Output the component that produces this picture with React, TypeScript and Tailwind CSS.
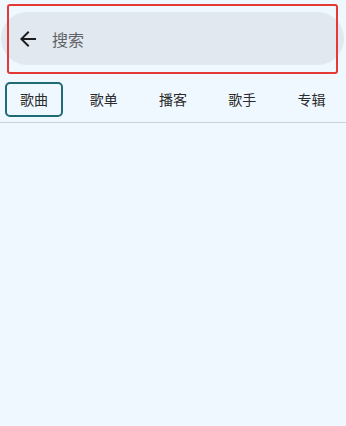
import { MdArrowBack } from "react-icons/md";

const tabs = ["歌曲", "歌单", "播客", "歌手", "专辑"];

export default function App() {
  return (
    <div
      className="w-[346px] h-[426px] bg-[#f0f8ff] overflow-hidden"
      style={{ fontFamily: '"Noto Sans CJK SC", "Noto Sans", sans-serif' }}
    >
      {/* search bar */}
      <div className="relative h-[78px] pt-[12px] pl-[1px] pr-[2px]">
        <div className="flex items-center h-[53px] rounded-full bg-[#e1e8ef] pl-[15px]">
          <MdArrowBack className="w-[24px] h-[24px] text-[#1d1d1f]" />
          <span className="ml-[12px] text-[16px] text-[#5f6368] leading-none">搜索</span>
        </div>
        <div className="absolute left-[7px] top-[4px] w-[331px] h-[70px] border-2 border-[#e53935] rounded-[3px] pointer-events-none" />
      </div>

      {/* tabs */}
      <div className="grid grid-cols-5 h-[45px] border-b border-[#c9d1d9]">
        {tabs.map((t, i) => (
          <div key={t} className="flex items-start justify-center pt-[4px]">
            <div
              className={
                i === 0
                  ? "w-[58px] h-[35px] -ml-[1px] flex items-center justify-center rounded-[5px] border-2 border-[#1e6b73] text-[14px] text-[#2a2a2a]"
                  : "w-[58px] h-[35px] flex items-center justify-center text-[14px] text-[#2a2a2a]"
              }
            >
              {t}
            </div>
          </div>
        ))}
      </div>
    </div>
  );
}
